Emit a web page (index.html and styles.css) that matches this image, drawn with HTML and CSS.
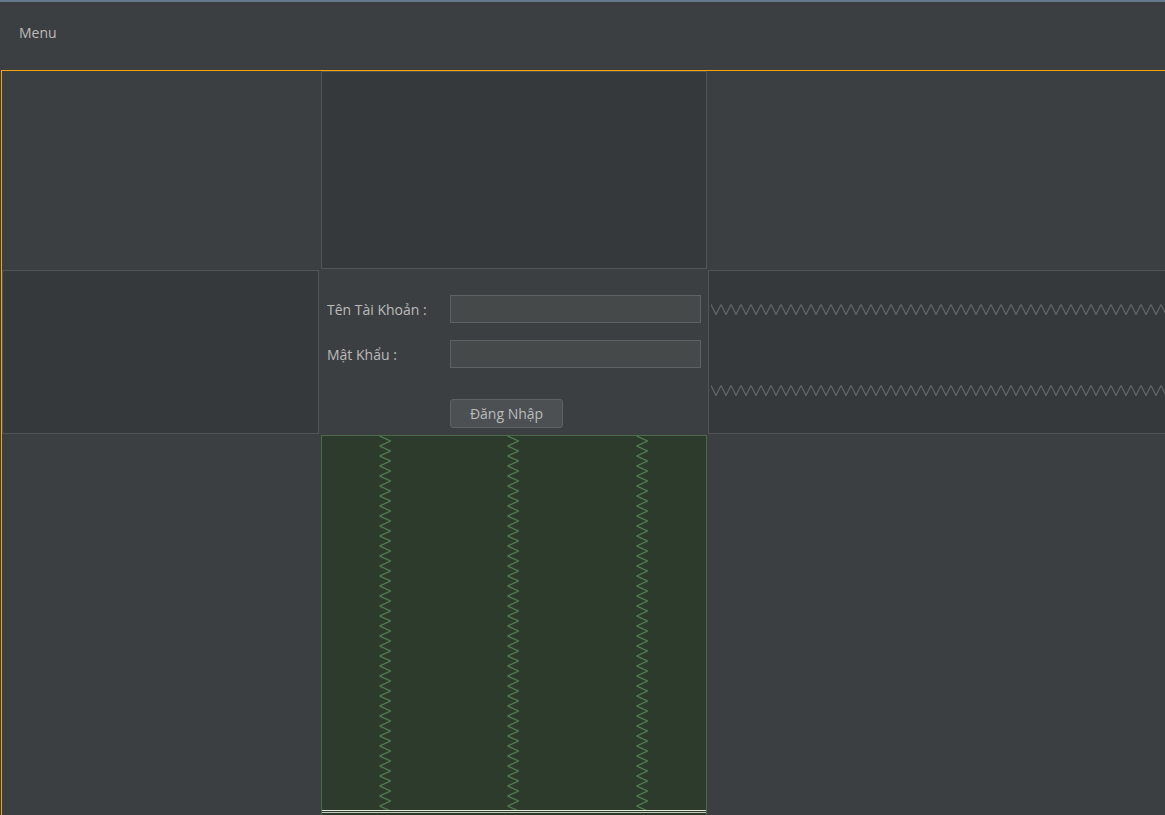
FILE: index.html
```html
<!DOCTYPE html>
<html lang="vi">
<head>
<meta charset="utf-8">
<title>Đăng Nhập</title>
<link rel="stylesheet" href="styles.css">
</head>
<body>
<div class="topline"></div>
<header class="menubar"><span class="menu">Menu</span></header>
<main class="frame">
  <div class="grid">
    <div class="blank"></div>
    <div class="panel top-panel"></div>
    <div class="blank"></div>

    <div class="panel side-panel left-panel"></div>
    <form class="login" onsubmit="return false">
      <label class="lbl" for="user">Tên Tài Khoản :</label>
      <input class="field" id="user" type="text">
      <label class="lbl" for="pass">Mật Khẩu :</label>
      <input class="field" id="pass" type="password">
      <span class="spacer"></span>
      <button class="btn" type="button">Đăng Nhập</button>
    </form>
    <div class="panel side-panel right-panel">
      <svg class="hzig hzig-1" width="100%" height="11">
        <defs>
          <pattern id="hz" width="10" height="11" patternUnits="userSpaceOnUse">
            <polyline points="0,0.5 5,10.5 10,0.5" fill="none" stroke="#62666a" stroke-width="1.2"/>
          </pattern>
        </defs>
        <rect width="100%" height="11" fill="url(#hz)"/>
      </svg>
      <svg class="hzig hzig-2" width="100%" height="11">
        <rect width="100%" height="11" fill="url(#hz)"/>
      </svg>
    </div>

    <div class="blank"></div>
    <div class="green">
      <div class="vzigs">
        <span></span>
        <svg class="vzig" width="12" height="374">
          <defs>
            <pattern id="vz" width="12" height="10" patternUnits="userSpaceOnUse">
              <polyline points="0.5,0 11.5,5 0.5,10" fill="none" stroke="#527e52" stroke-width="1.2"/>
            </pattern>
          </defs>
          <rect width="12" height="374" fill="url(#vz)"/>
        </svg>
        <span></span>
        <svg class="vzig" width="12" height="374"><rect width="12" height="374" fill="url(#vz)"/></svg>
        <span></span>
        <svg class="vzig" width="12" height="374"><rect width="12" height="374" fill="url(#vz)"/></svg>
      </div>
      <div class="rule rule-a"></div>
      <div class="rule rule-gap"></div>
      <div class="rule rule-b"></div>
    </div>
    <div class="blank"></div>
  </div>
</main>
</body>
</html>
```

FILE: styles.css
```css
html, body {
  margin: 0;
  padding: 0;
}
body {
  background: #3c3f41;
  color: #bbbbbb;
  font-family: "Open Sans", "Noto Sans", "Liberation Sans", sans-serif;
  font-size: 13px;
  width: 1165px;
  height: 815px;
  overflow: hidden;
}
.topline {
  height: 2px;
  background: #66788e;
}
.menubar {
  height: 68px;
  box-sizing: border-box;
  padding: 22px 0 0 19px;
  background: #3c3f41;
}
.menu {
  display: block;
  font-size: 14px;
  line-height: 18px;
  color: #bbbbbb;
}
.frame {
  margin-left: 1px;
  width: 1200px;
  border-top: 1px solid #f5a30c;
  border-left: 1px solid #f5a30c;
  background: #3c3f41;
}
.grid {
  display: grid;
  grid-template-columns: 319px 387px 1fr;
  grid-template-rows: 199px 165px 400px;
}
.panel {
  box-sizing: border-box;
  border: 1px solid #515557;
  background: #36393b;
}
.top-panel {
  width: 386px;
  height: 198px;
}
.side-panel {
  height: 164px;
}
.left-panel {
  width: 317px;
}
.right-panel {
  padding-left: 2px;
}
.hzig {
  display: block;
}
.hzig-1 {
  margin-top: 33px;
}
.hzig-2 {
  margin-top: 70px;
}
.login {
  display: grid;
  grid-template-columns: 123px 251px;
  grid-auto-rows: 28px;
  row-gap: 17px;
  align-items: center;
  align-content: start;
  padding: 25px 0 0 6px;
  margin: 0;
}
.lbl {
  color: #bbbbbb;
  font-size: 14px;
  white-space: nowrap;
}
.field {
  box-sizing: border-box;
  width: 251px;
  height: 28px;
  margin: 0;
  background: #45494a;
  border: 1px solid #5f6264;
  color: #bbbbbb;
  outline: none;
}
.spacer {
  grid-column: 1;
}
.btn {
  grid-column: 2;
  align-self: start;
  margin-top: 14px;
  box-sizing: border-box;
  width: 113px;
  height: 29px;
  background: #4c5052;
  border: 1px solid #5e6264;
  border-radius: 3px;
  color: #bbbbbb;
  font-family: "Open Sans", "Noto Sans", "Liberation Sans", sans-serif;
  font-size: 14px;
  padding: 0;
}
.green {
  box-sizing: border-box;
  width: 386px;
  height: 400px;
  background: #2d3b2d;
  border: 1px solid #4a6a4a;
}
.vzigs {
  display: grid;
  grid-template-columns: 57px 12px 116px 12px 117px 12px;
  height: 374px;
}
.vzig {
  display: block;
}
.rule {
  height: 1px;
}
.rule-a {
  background: #e6ead8;
}
.rule-gap {
  background: #2d3b2d;
}
.rule-b {
  background: #c4ccbc;
}
```
